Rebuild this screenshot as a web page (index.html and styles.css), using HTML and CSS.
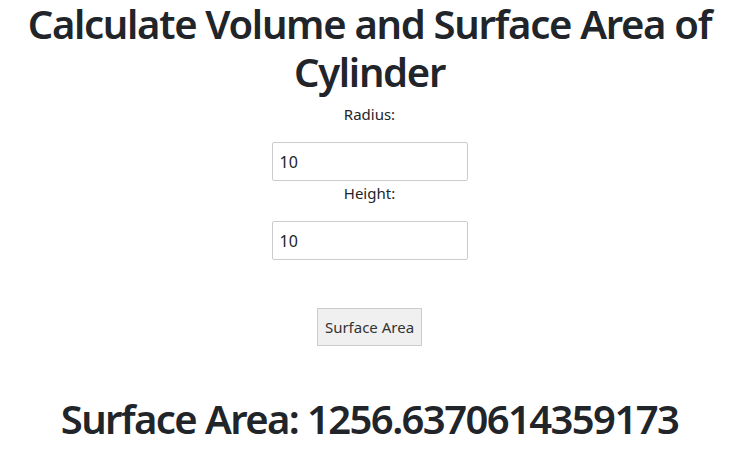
FILE: index.html
```html
<!DOCTYPE html>
<html>
<head>
<meta charset="utf-8">
<link rel="stylesheet" href="styles.css">
</head>
<body>
<main class="page">
  <h1 class="title">Calculate Volume and Surface Area of Cylinder</h1>
  <label class="field-label" for="radius">Radius:</label>
  <input class="field" id="radius" type="text" value="10">
  <label class="field-label" for="height">Height:</label>
  <input class="field" id="height" type="text" value="10">
  <button class="btn" type="button">Surface Area</button>
  <h2 class="result">Surface Area: 1256.6370614359173</h2>
</main>
</body>
</html>
```
FILE: styles.css
```css
html, body {
  margin: 0;
  padding: 0;
  background: #fff;
}
body {
  font-family: "Noto Sans", "Open Sans", sans-serif;
  color: #212529;
}
.page {
  display: flex;
  flex-direction: column;
  align-items: center;
  text-align: center;
}
.title {
  margin: 0 0 7px;
  font-size: 40px;
  font-weight: 600;
  line-height: 48px;
  letter-spacing: -1.3px;
}
.field-label {
  display: block;
  font-size: 15px;
  line-height: 22px;
  margin-bottom: 17px;
}
.field {
  box-sizing: border-box;
  width: 196px;
  height: 39px;
  margin-bottom: 1px;
  border: 1px solid #cccccc;
  border-radius: 2px;
  padding: 0 7px;
  font-family: inherit;
  font-size: 16px;
  color: #212529;
  outline: none;
}
.btn {
  margin-top: 47px;
  box-sizing: border-box;
  height: 38px;
  padding: 0 7px;
  background: #f0f0f0;
  border: 1px solid #cccccc;
  border-radius: 0;
  font-family: inherit;
  font-size: 15px;
  color: #333;
}
.result {
  margin: 49px 0 0;
  font-size: 40px;
  font-weight: 600;
  line-height: 48px;
  letter-spacing: -1.6px;
}
```
